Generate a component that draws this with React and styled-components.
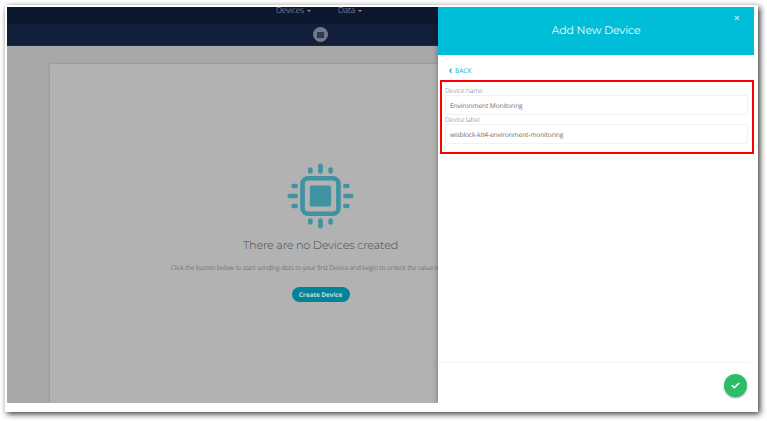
import React from 'react';
import styled, { createGlobalStyle } from 'styled-components';

const GlobalStyle = createGlobalStyle`
  * { box-sizing: border-box; }
  body {
    margin: 0;
    background: #fff;
    overflow: hidden;
    font-family: 'Open Sans', sans-serif;
    text-rendering: geometricPrecision;
  }
  input, button { text-rendering: inherit; }
`;

const Stage = styled.div`
  width: 767px;
  height: 421px;
  padding: 5px 9px 9px 5px;
`;

const Frame = styled.div`
  width: 753px;
  height: 407px;
  padding: 2px 4px 9px 2px;
  background: #fff;
  box-shadow: 2px 2px 6px rgba(0, 0, 0, 0.8);
`;

const Screen = styled.div`
  display: flex;
  height: 396px;
`;

const Page = styled.main`
  display: flex;
  flex-direction: column;
  width: 431px;
  overflow: hidden;
  background: #a8a8a8;
`;

const NavBar = styled.nav`
  display: flex;
  flex: none;
  gap: 27px;
  height: 17px;
  padding-left: 269px;
  background: #0d182f;
`;

const NavItem = styled.span`
  display: flex;
  align-items: center;
  gap: 3px;
  height: 17px;
  margin-top: -5px;
  color: #a0a5ae;
  font-size: 8.4px;
  font-weight: 300;
  line-height: 17px;
  letter-spacing: ${(p) => p.$tracking || 0}px;

  &::after {
    content: '';
    margin-top: 1px;
    border: 2px solid transparent;
    border-top-color: #8b909b;
    border-bottom: 0;
  }
`;

const SubBar = styled.div`
  display: flex;
  flex: none;
  align-items: center;
  height: 22px;
  padding-left: 306px;
  background: #111f3b;
  border-bottom: 1px solid #1d2b4a;
`;

const RoundTab = styled.span`
  display: grid;
  place-items: center;
  width: 15px;
  height: 15px;
  border-radius: 50%;
  background: #70798a;
`;

const Card = styled.section`
  display: flex;
  flex: 1;
  flex-direction: column;
  align-items: center;
  width: 541px;
  margin: 18px 0 0 43px;
  padding-top: 99px;
  background: #b2b2b2;
  box-shadow: 0 0 2px rgba(0, 0, 0, 0.22);
`;

const EmptyTitle = styled.h2`
  margin: 7px 0 0;
  color: #484848;
  font: 300 11.2px/18px Montserrat, Inter, sans-serif;
  letter-spacing: -0.16px;
  white-space: nowrap;
`;

const EmptyText = styled.p`
  margin: 7px 0 0;
  color: #505050;
  font-size: 6.5px;
  font-weight: 300;
  line-height: 14px;
  letter-spacing: -0.09px;
  white-space: nowrap;
`;

const CreateButton = styled.button`
  width: 58px;
  height: 15px;
  margin: 12px 0 0;
  padding: 0;
  border: 0;
  border-radius: 8px;
  background: #008499;
  color: #c4d9dc;
  font: 700 6.5px/15px 'Open Sans', sans-serif;
  letter-spacing: -0.09px;
  white-space: nowrap;
`;

const Drawer = styled.aside`
  z-index: 1;
  display: flex;
  flex-direction: column;
  width: 316px;
  background: #fff;
  clip-path: inset(0 0 0 -12px);
  box-shadow: -1px 0 5px rgba(0, 0, 0, 0.28);
`;

const DrawerHeader = styled.header`
  position: relative;
  height: 48px;
  background: #00bdd8;
  text-align: center;
`;

const DrawerTitle = styled.h1`
  margin: 0;
  color: #e8fafc;
  font: 400 11px/46px Montserrat, Inter, sans-serif;
  letter-spacing: -0.15px;
`;

const CloseButton = styled.button`
  position: absolute;
  top: 8px;
  right: 14px;
  display: flex;
  padding: 0;
  border: 0;
  background: none;
`;

const BackLink = styled.a`
  display: flex;
  align-items: center;
  gap: 3px;
  height: 25px;
  padding: 7px 0 0 11px;
  color: #00b8d0;
  font-size: 6.5px;
  line-height: 18px;
`;

const Fields = styled.form`
  height: 74px;
  margin-left: 2px;
  padding: 4px 4px 0 3px;
  border: 2px solid #f00;
`;

const Label = styled.label`
  display: block;
  height: 9px;
  color: #707070;
  font-size: 6.7px;
  font-weight: 300;
  line-height: 10px;
  letter-spacing: -0.1px;
`;

const Input = styled.input`
  display: block;
  width: 303px;
  height: 20px;
  padding: 0 4px;
  border: 1px solid #f2f2f2;
  border-radius: 1px;
  outline: 0;
  background: #fff;
  color: #6c6c6c;
  font: 400 6.6px 'Open Sans', sans-serif;
  letter-spacing: -0.12px;
`;

const DrawerFooter = styled.footer`
  display: flex;
  justify-content: flex-end;
  height: 41px;
  margin: auto 4px 0 1px;
  padding: 11px 3px 0 0;
  border-top: 1px solid #f4f4f4;
`;

const ConfirmButton = styled.button`
  display: grid;
  place-items: center;
  width: 23px;
  height: 23px;
  padding: 0;
  border: 0;
  border-radius: 50%;
  background: #2dbd66;
  box-shadow: 0 1px 2px rgba(0, 0, 0, 0.35);
`;

const ChipIcon = () => (
  <svg width="67" height="66" viewBox="0 0 66 66" preserveAspectRatio="none" fill="none" stroke="#3f93a3" strokeLinecap="round">
    <rect x="15.3" y="15.3" width="35.4" height="35.4" rx="5.5" strokeWidth="4.6" />
    <rect x="22.5" y="22.5" width="21" height="21" rx="1.5" fill="#3f93a3" stroke="none" />
    <path
      strokeWidth="4.6"
      d="M33 2.7v5.8M33 57.5v5.8M2.7 33h5.8M57.5 33h5.8M23 6.5v2M43 6.5v2M23 57.5v2M43 57.5v2M6.5 23h2M6.5 43h2M57.5 23h2M57.5 43h2"
    />
  </svg>
);

const GridIcon = () => (
  <svg width="7" height="6" viewBox="0 0 7 6">
    <rect width="7" height="6" rx="0.8" fill="#263149" />
    <path d="M0 2h7M0 4h7M2.4 0v6M4.6 0v6" stroke="#535d70" strokeWidth="0.35" />
  </svg>
);

const CloseIcon = () => (
  <svg width="6" height="6" viewBox="0 0 6 6">
    <path d="M1 1l4 4M5 1L1 5" stroke="#a1e5ef" strokeWidth="1.4" />
  </svg>
);

const ChevronIcon = () => (
  <svg width="3" height="6" viewBox="0 0 3 6" fill="none">
    <path d="M2.6 0.5L0.7 2.7l1.9 2.2" stroke="#00b8d0" strokeWidth="1.1" />
  </svg>
);

const CheckIcon = () => (
  <svg width="9" height="7" viewBox="0 0 9 7" fill="none">
    <path d="M0.8 3.3l2.4 2.5L8.2 1" stroke="#fff" strokeWidth="1.5" />
  </svg>
);

export default function App() {
  return (
    <Stage>
      <GlobalStyle />
      <Frame>
        <Screen>
          <Page>
            <NavBar>
              <NavItem $tracking={-0.12}>Devices</NavItem>
              <NavItem $tracking={-0.1}>Data</NavItem>
            </NavBar>
            <SubBar>
              <RoundTab><GridIcon /></RoundTab>
            </SubBar>
            <Card>
              <ChipIcon />
              <EmptyTitle>There are no Devices created</EmptyTitle>
              <EmptyText>
                Click the button below to start sending dots to your first Device and begin to unlock the value of your data.
              </EmptyText>
              <CreateButton>Create Device</CreateButton>
            </Card>
          </Page>
          <Drawer>
            <DrawerHeader>
              <DrawerTitle>Add New Device</DrawerTitle>
              <CloseButton aria-label="Close"><CloseIcon /></CloseButton>
            </DrawerHeader>
            <BackLink><ChevronIcon />BACK</BackLink>
            <Fields>
              <Label htmlFor="name">Device name</Label>
              <Input id="name" defaultValue="Environment Monitoring" />
              <Label htmlFor="label">Device label</Label>
              <Input id="label" defaultValue="wisblock-kit4-environment-monitoring" />
            </Fields>
            <DrawerFooter>
              <ConfirmButton aria-label="Confirm"><CheckIcon /></ConfirmButton>
            </DrawerFooter>
          </Drawer>
        </Screen>
      </Frame>
    </Stage>
  );
}
